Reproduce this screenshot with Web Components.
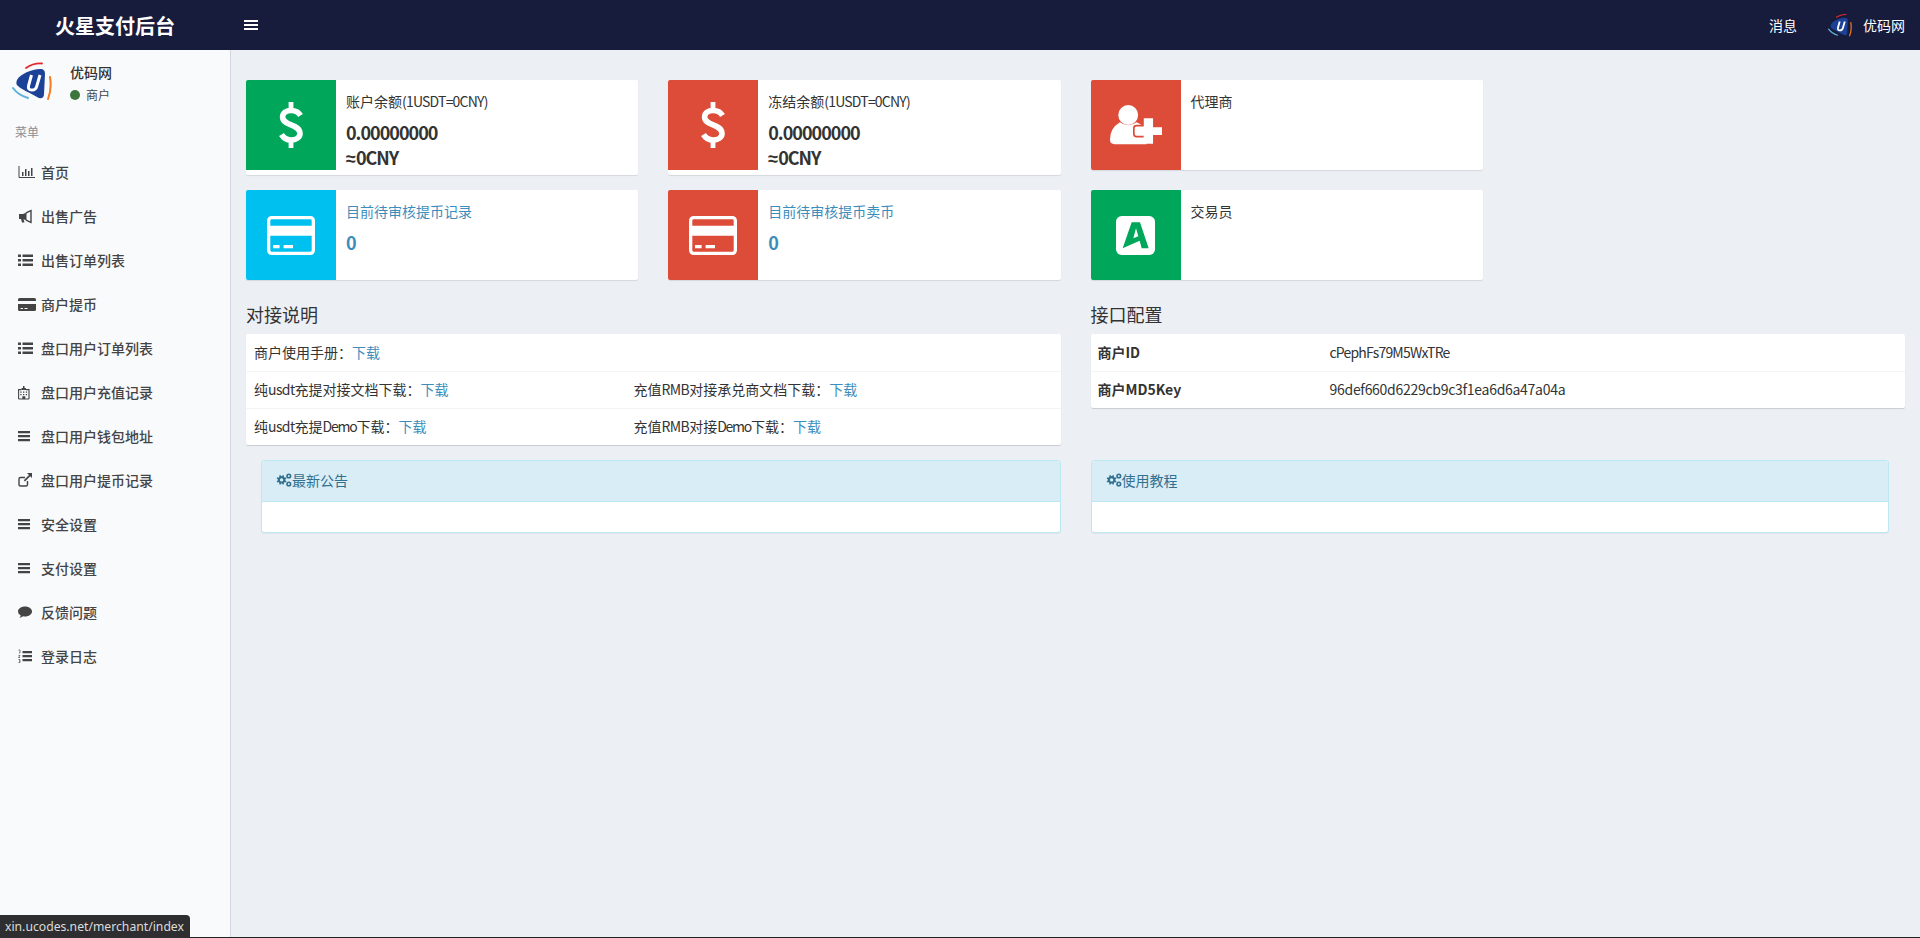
<!DOCTYPE html>
<html lang="zh">
<head>
<meta charset="utf-8">
<title>火星支付后台</title>
<style>
html, body { margin: 0; height: 100%; overflow: hidden; }
body { font-family: "Noto Sans CJK SC", "Noto Sans", sans-serif; font-size: 14px; color: #333; background: #ecf0f5; }
a { color: #3c8dbc; }
.lat { letter-spacing: -.6px; }
.demo { letter-spacing: -1.25px; }
</style>
</head>
<body>
<merchant-app>
    <top-bar slot="header"></top-bar>
    <side-bar slot="sidebar"></side-bar>

    <info-box color="#00a65a" icon="dollar" label="账户余额" note="(1USDT=0CNY)" value="0.00000000" extra="0CNY"></info-box>
    <info-box color="#dd4b39" icon="dollar" label="冻结余额" note="(1USDT=0CNY)" value="0.00000000" extra="0CNY"></info-box>
    <info-box color="#dd4b39" icon="userplus" label="代理商"></info-box>
    <span class="filler"></span>
    <info-box color="#00c0ef" icon="card" label="目前待审核提币记录" value="0" link></info-box>
    <info-box color="#dd4b39" icon="card" label="目前待审核提币卖币" value="0" link></info-box>
    <info-box color="#00a65a" icon="logoa" label="交易员"></info-box>
    <span class="filler"></span>

    <doc-panel class="wide" heading="对接说明">
        <doc-row><span>商户使用手册：<a>下载</a></span></doc-row>
        <doc-row><span>纯<span class="lat">usdt</span>充提对接文档下载：<a>下载</a></span><span>充值<span class="lat">RMB</span>对接承兑商文档下载：<a>下载</a></span></doc-row>
        <doc-row><span>纯<span class="lat">usdt</span>充提<span class="demo">Demo</span>下载：<a>下载</a></span><span>充值<span class="lat">RMB</span>对接<span class="demo">Demo</span>下载：<a>下载</a></span></doc-row>
    </doc-panel>
    <doc-panel class="wide" heading="接口配置">
        <doc-row keys><b>商户ID</b><span style="letter-spacing: -.8px">cPephFs79M5WxTRe</span></doc-row>
        <doc-row keys><b>商户MD5Key</b><span style="letter-spacing: -.28px">96def660d6229cb9c3f1ea6d6a47a04a</span></doc-row>
    </doc-panel>

    <notice-box class="wide" heading="最新公告" side="left"></notice-box>
    <notice-box class="wide" heading="使用教程" side="right"></notice-box>

    <status-tip slot="overlay">xin.ucodes.net/merchant/index</status-tip>
</merchant-app>

<template id="logo-tpl">
<style>
:host { display: inline-block; width: 40px; height: 38px; flex: none; }
svg { display: block; width: 100%; height: 100%; }
</style>
<svg viewBox="0 0 40 38" fill="none">
    <path d="M5 18C8 12 20 7 28 7c4 0 5 2 5 5l-1 20c0 5-4 5-7 3-7-4-16-8-19-11-2-1-2-4-1-6z" fill="#1c4298"/>
    <path d="M19.500 13 16.600 23.500q-1 4.600 3.200 4.600 4 0 5-4L28 13" stroke="#fff" stroke-width="3"/>
    <path d="M14 6Q21 1 30 1.500" stroke="#e3272b" stroke-width="1.800" stroke-linecap="round"/>
    <path d="M38 15Q40 27 36 37" stroke="#f47b20" stroke-width="2" stroke-linecap="round"/>
    <path d="M1 26Q6 33 16 36" stroke="#5fb3d9" stroke-width="2" stroke-linecap="round"/>
</svg>
</template>

<script>
class BrandLogo extends HTMLElement {
    constructor() {
        super();
        this.attachShadow({mode: "open"});
        this.shadowRoot.appendChild(document.querySelector("#logo-tpl").content.cloneNode(true));
    }
}
customElements.define("brand-logo", BrandLogo);

class MerchantApp extends HTMLElement {
    constructor() {
        super();
        this.attachShadow({mode: "open"}).innerHTML = `
<style>
:host { display: flex; flex-flow: column nowrap; height: 100vh; position: relative; }
:host::after { content: ""; position: absolute; left: 0; right: 0; bottom: 0; height: 1px; background: #222; }
.body { flex: 1; display: flex; min-height: 0; }
.main {
    flex: 1;
    display: grid;
    grid-template-columns: repeat(4, 1fr);
    grid-auto-rows: min-content;
    column-gap: 30px;
    row-gap: 15px;
    align-items: start;
    padding: 30px 15px 0;
}
::slotted(.wide) { grid-column: span 2; }
</style>
<slot name="header"></slot>
<div class="body">
    <slot name="sidebar"></slot>
    <div class="main"><slot></slot></div>
</div>
<slot name="overlay"></slot>`;
    }
}
customElements.define("merchant-app", MerchantApp);

class TopBar extends HTMLElement {
    constructor() {
        super();
        this.attachShadow({mode: "open"}).innerHTML = `
<style>
:host { display: flex; align-items: center; height: 50px; flex: none; background: #181c3c; color: #fff; }
.brand { width: 230px; text-align: center; font-size: 20px; font-weight: 700; }
.toggle { margin-left: 14px; display: block; }
.right { margin-left: auto; display: flex; align-items: center; padding-right: 15px; }
.msg { margin-right: 31px; }
brand-logo { width: 24px; height: 24px; margin-right: 11px; }
</style>
<div class="brand">火星支付后台</div>
<svg class="toggle" width="14" height="12" viewBox="0 0 14 12" fill="#fff"><rect y="1" width="14" height="2"/><rect y="5" width="14" height="2"/><rect y="9" width="14" height="2"/></svg>
<div class="right"><span class="msg">消息</span><brand-logo></brand-logo><span>优码网</span></div>`;
    }
}
customElements.define("top-bar", TopBar);

const MENU_ICONS = {
    chart: '<path d="M1 1v11.500h16" fill="none" stroke="currentColor"/><path d="M4 7h1.500v4H4zM7 4h1.500v7H7zM10 6h1.500v5H10zM13 3h1.500v8H13z"/>',
    horn: '<path d="M1 5h4v5H1z"/><path d="M8 3.800 13 1.500v12L8 11.200" fill="none" stroke="currentColor" stroke-width="1.400"/><path d="M5 5l3.500-1.500v8L5 10z"/><path d="M3 10h2.500l1 3.500H4z"/>',
    list: '<path d="M0 1.500h3v2.500H0zM4.500 1.500H15v2.500H4.500zM0 6h3v2.500H0zM4.500 6H15v2.500H4.500zM0 10.500h3V13H0zM4.500 10.500H15V13H4.500z"/>',
    cardfill: '<path d="M0 2.500Q0 1 1.500 1h15Q18 1 18 2.500V4H0zM0 7h18v5.500Q18 14 16.500 14h-15Q0 14 0 12.500zM2.500 11v1H5v-1zm4 0v1h3v-1z" fill-rule="evenodd"/>',
    hospital: '<path d="M.6 14V4.600h2.900M11 14V4.600H8M.6 14H11" fill="none" stroke="currentColor" stroke-width="1.100"/><path d="M3.500 3H5V1h1.500v2H8v2H3.500zM2.300 6.500h1.300v1.300H2.300zM5 6.500h1.300v1.300H5zM7.800 6.500h1.300v1.300H7.800zM2.300 9h1.300v1.300H2.300zM5 9h1.300v1.300H5zM7.800 9h1.300v1.300H7.800zM4.300 11.300h3V14h-3z"/>',
    bars: '<path d="M0 2h12v2.200H0zM0 6h12v2.200H0zM0 10h12v2.200H0z"/>',
    external: '<path d="M9.500 8v3.500q0 1.500-1.500 1.500H2.500Q1 13 1 11.500V6q0-1.500 1.500-1.500H7" fill="none" stroke="currentColor" stroke-width="1.400"/><path d="M9 0h5v5l-1.800-1.800L7 8.400 5.800 7.200 11 2z"/>',
    comment: '<path d="M7 1.500c3.900 0 7 2.200 7 5s-3.100 5-7 5q-1 0-2-.2-1.500 1.300-3.500 1.500 1-1 1.200-2.600Q0 9.300 0 6.500c0-2.800 3.100-5 7-5z"/>',
    listol: '<path d="M4.500 2H14v2.200H4.500zM4.500 6H14v2.200H4.500zM4.500 10H14v2.200H4.500z"/><path d="M0.500 1h1.500v3H1M.5 6.500H2L.5 8.500H2M.5 10.500H2v3H.5M1 12h1" fill="none" stroke="currentColor" stroke-width=".700"/>'
};

class SideItem extends HTMLElement {
    constructor() {
        super();
        this.attachShadow({mode: "open"}).innerHTML = `
<style>
:host { display: flex; align-items: center; height: 44px; padding-left: 18px; color: #444; font-weight: 500; }
.ic { width: 23px; flex: none; display: flex; }
svg { display: block; fill: currentColor; }
</style>
<span class="ic"><svg width="18" height="15" viewBox="0 0 18 15">${MENU_ICONS[this.getAttribute("icon")]}</svg></span><slot></slot>`;
    }
}
customElements.define("side-item", SideItem);

class SideBar extends HTMLElement {
    constructor() {
        super();
        const items = [
            ["chart", "首页"], ["horn", "出售广告"], ["list", "出售订单列表"], ["cardfill", "商户提币"],
            ["list", "盘口用户订单列表"], ["hospital", "盘口用户充值记录"], ["bars", "盘口用户钱包地址"],
            ["external", "盘口用户提币记录"], ["bars", "安全设置"], ["bars", "支付设置"],
            ["comment", "反馈问题"], ["listol", "登录日志"]
        ];
        this.attachShadow({mode: "open"}).innerHTML = `
<style>
:host { display: block; width: 230px; flex: none; background: #f9fafc; border-right: 1px solid #d2d6de; }
.user { display: flex; height: 70px; box-sizing: border-box; padding: 12px 0 0 12px; }
.who { margin-left: 18px; }
.name { font-weight: 500; line-height: 20px; }
.state { display: flex; align-items: center; font-size: 12px; color: #444; margin-top: 5px; line-height: 16px; }
.dot { width: 10px; height: 10px; border-radius: 50%; background: #3c763d; margin-right: 6px; }
.head { font-size: 12px; color: #8a8f96; padding: 0 15px; line-height: 20px; margin: 2px 0 8px; }
</style>
<div class="user">
    <brand-logo></brand-logo>
    <div class="who"><div class="name">优码网</div><div class="state"><i class="dot"></i>商户</div></div>
</div>
<div class="head">菜单</div>
${items.map(([icon, text]) => `<side-item icon="${icon}">${text}</side-item>`).join("")}`;
    }
}
customElements.define("side-bar", SideBar);

const BOX_ICONS = {
    dollar: `<svg width="24" height="46" viewBox="0 0 24 46" fill="none" stroke="#fff" stroke-width="5.600">
        <path d="M21.500 13.500C19.500 10 16.500 8.500 12.200 8.500 7 8.500 3.600 11 3.600 15 3.600 24 21 21.800 21 31.500 21 35.500 17 38 12 38 8 38 4.500 36 2.500 32.500"/>
        <path d="M12 0v7M12 39v7" stroke-width="4.800"/></svg>`,
    card: `<svg width="48" height="39" viewBox="0 0 48 39" fill="none">
        <rect x="1.650" y="1.650" width="44.700" height="35.700" rx="3" stroke="#fff" stroke-width="3.300"/>
        <path d="M3 9.700h42v10H3zM6 29h6.600v3.300H6zM16.600 29H26v3.300h-9.400z" fill="#fff"/></svg>`,
    userplus: `<svg width="52" height="39.300" viewBox="0 0 157 118">
        <circle cx="55" cy="30" r="30" fill="#fff"/>
        <path d="M14 118Q0 118 0 104 0 70 30 52 55 70 80 52 100 60 110 75V118Z" fill="#fff"/>
        <path d="M102 62H80Q72 62 72 70V87Q72 95 80 95H102" fill="#fff" stroke="#dd4b39" stroke-width="5"/>
        <path d="M102 40h28v27h27v23h-27v27h-28V90H77V67h25z" fill="#fff"/></svg>`,
    logoa: `<svg width="39" height="39" viewBox="0 0 117 117">
        <rect width="117" height="117" rx="17" fill="#fff"/>
        <path fill="#00a65a" fill-rule="evenodd" d="M47 19H72L98 97H77L71 74 20 97zM60 37 52 67 67 61z"/></svg>`
};

class InfoBox extends HTMLElement {
    constructor() {
        super();
        const note = this.getAttribute("note");
        const value = this.getAttribute("value");
        const extra = this.getAttribute("extra");
        this.attachShadow({mode: "open"}).innerHTML = `
<style>
:host { display: flex; align-items: flex-start; min-height: 90px; background: #fff; border-radius: 2px; box-shadow: 0 1px 1px rgba(0,0,0,.1); overflow: hidden; }
.icon { width: 90px; height: 90px; flex: none; display: flex; align-items: center; justify-content: center; background: ${this.getAttribute("color")}; }
.content { padding: 11px 10px 5px; }
.label { line-height: 20px; margin-bottom: 9px; }
.note { letter-spacing: -.8px; }
.num { font-size: 18px; font-weight: 700; line-height: 25px; letter-spacing: -1px; }
.approx { font-family: "Liberation Sans", sans-serif; letter-spacing: 0; line-height: 0; }
.link { color: #3c8dbc; }
</style>
<div class="icon">${BOX_ICONS[this.getAttribute("icon")]}</div>
<div class="content ${this.hasAttribute("link") ? "link" : ""}">
    <div class="label">${this.getAttribute("label")}${note ? `<span class="note">${note}</span>` : ""}</div>
    ${value ? `<div class="num">${value}</div>` : ""}
    ${extra ? `<div class="num"><span class="approx">≈</span>${extra}</div>` : ""}
</div>`;
    }
}
customElements.define("info-box", InfoBox);

class DocPanel extends HTMLElement {
    constructor() {
        super();
        this.attachShadow({mode: "open"}).innerHTML = `
<style>
:host { display: block; }
h3 { margin: 6px 0 7px; font-size: 18px; font-weight: 400; line-height: 26px; color: #333; }
.box { background: #fff; border-radius: 2px; box-shadow: 0 1px 1px rgba(0,0,0,.15); }
</style>
<h3>${this.getAttribute("heading")}</h3>
<div class="box"><slot></slot></div>`;
    }
}
customElements.define("doc-panel", DocPanel);

class DocRow extends HTMLElement {
    constructor() {
        super();
        this.attachShadow({mode: "open"}).innerHTML = `
<style>
:host { display: grid; grid-template-columns: 379.500px 1fr; height: 37px; align-items: center; padding: 0 0 2px 8px; border-top: 1px solid #f4f4f4; box-sizing: border-box; }
:host([keys]) { grid-template-columns: 232px 1fr; padding-left: 7px; }
:host(:first-child) { border-top: 0; }
</style>
<slot></slot>`;
    }
}
customElements.define("doc-row", DocRow);

class NoticeBox extends HTMLElement {
    constructor() {
        super();
        const side = this.getAttribute("side");
        this.attachShadow({mode: "open"}).innerHTML = `
<style>
:host { display: block; ${side === "left" ? "margin-left: 15px;" : "margin-right: 16px;"} border: 1px solid #bce8f1; border-radius: 3px; background: #fff; box-shadow: 0 1px 1px rgba(0,0,0,.05); }
.head { display: flex; align-items: center; height: 41px; padding: 0 0 2px 14px; background: #d9edf7; color: #31708f; border-bottom: 1px solid #bce8f1; box-sizing: border-box; }
.body { height: 30px; }
svg { display: block; fill: #31708f; }
</style>
<div class="head">
    <svg width="16" height="14" viewBox="0 0 16 14"><path fill-rule="evenodd" d="M5 3 6.200 3.200 6.800 2 8 2.500 7.800 3.800 8.800 4.700 10 4.200 10.500 5.400 9.400 6.200v1.300L10.500 8.300 10 9.500 8.800 9 7.800 10 8 11.200 6.800 11.700 6.200 10.500H5L4.400 11.700 3.200 11.200 3.400 10 2.400 9 1.200 9.500.7 8.300 1.800 7.500V6.200L.7 5.400 1.200 4.200 2.400 4.700 3.400 3.800 3.200 2.500 4.400 2zM5.600 5.200a1.700 1.700 0 1 0 0 3.400 1.700 1.700 0 0 0 0-3.400z"/><circle cx="12.800" cy="3" r="2.600"/><circle cx="12.800" cy="11" r="2.600"/><circle cx="12.800" cy="3" r="1" fill="#d9edf7"/><circle cx="12.800" cy="11" r="1" fill="#d9edf7"/></svg>
    <span>${this.getAttribute("heading")}</span>
</div>
<div class="body"></div>`;
    }
}
customElements.define("notice-box", NoticeBox);

class StatusTip extends HTMLElement {
    constructor() {
        super();
        this.attachShadow({mode: "open"}).innerHTML = `
<style>
:host { position: absolute; left: 0; bottom: 0; z-index: 1; height: 23px; width: 190px; box-sizing: border-box; padding-left: 5px; background: #2e2e30; color: #dcdcdc; border-top-right-radius: 4px; font: 12.200px/23px "Noto Sans", sans-serif; }
</style>
<slot></slot>`;
    }
}
customElements.define("status-tip", StatusTip);
</script>
</body>
</html>
